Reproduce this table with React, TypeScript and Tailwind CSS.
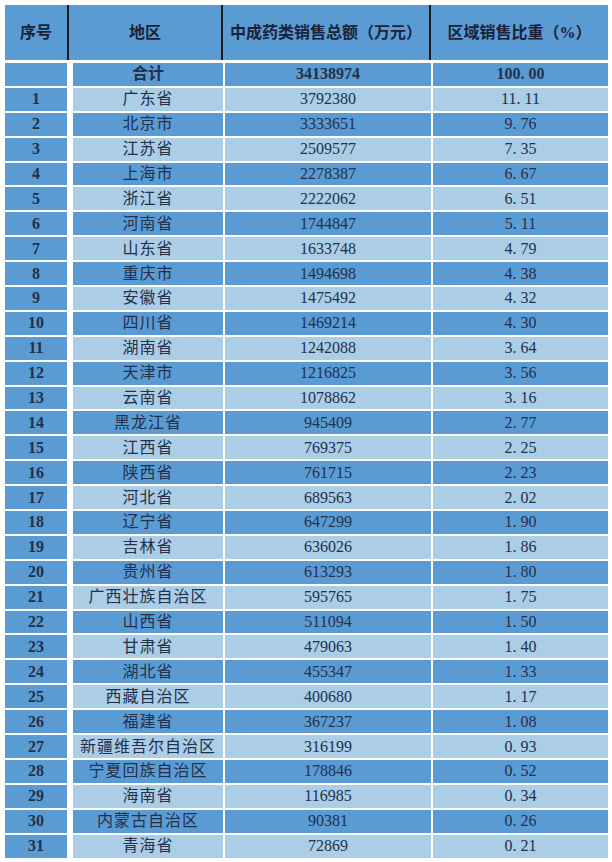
import React from 'react';

const rows: [string, string, string][] = [
    ['广东省', '3792380', '11.11'],
    ['北京市', '3333651', '9.76'],
    ['江苏省', '2509577', '7.35'],
    ['上海市', '2278387', '6.67'],
    ['浙江省', '2222062', '6.51'],
    ['河南省', '1744847', '5.11'],
    ['山东省', '1633748', '4.79'],
    ['重庆市', '1494698', '4.38'],
    ['安徽省', '1475492', '4.32'],
    ['四川省', '1469214', '4.30'],
    ['湖南省', '1242088', '3.64'],
    ['天津市', '1216825', '3.56'],
    ['云南省', '1078862', '3.16'],
    ['黑龙江省', '945409', '2.77'],
    ['江西省', '769375', '2.25'],
    ['陕西省', '761715', '2.23'],
    ['河北省', '689563', '2.02'],
    ['辽宁省', '647299', '1.90'],
    ['吉林省', '636026', '1.86'],
    ['贵州省', '613293', '1.80'],
    ['广西壮族自治区', '595765', '1.75'],
    ['山西省', '511094', '1.50'],
    ['甘肃省', '479063', '1.40'],
    ['湖北省', '455347', '1.33'],
    ['西藏自治区', '400680', '1.17'],
    ['福建省', '367237', '1.08'],
    ['新疆维吾尔自治区', '316199', '0.93'],
    ['宁夏回族自治区', '178846', '0.52'],
    ['海南省', '116985', '0.34'],
    ['内蒙古自治区', '90381', '0.26'],
    ['青海省', '72869', '0.21'],
];

const font = { fontFamily: '"Liberation Serif", "Noto Sans CJK SC", serif' };

// 小数点后留一点空隙，像原表的宋体
function Share({ value }: { value: string }) {
    const [a, b] = value.split('.');
    return (
        <span>
            {a}.<span className="ml-[4px]">{b}</span>
        </span>
    );
}

export default function App() {
    return (
        <div className="w-[612px] h-[862px] bg-white pt-[5px] pl-[5px] overflow-hidden text-[#22304c]" style={font}>
            {/* 表头 */}
            <div className="flex h-[55px] w-[603px] bg-[#5b9bd3] text-[#1a2238] text-[16px] font-bold">
                <div className="w-[64px] flex items-center justify-center border-r-2 border-[#1b1b1b]">序号</div>
                <div className="w-[154px] flex items-center justify-center border-r-2 border-[#1b1b1b]">地区</div>
                <div className="w-[208px] flex items-center justify-center border-r-2 border-[#1b1b1b]">中成药类销售总额（万元）</div>
                <div className="flex-1 flex items-center justify-center">区域销售比重（%）</div>
            </div>

            <div className="flex flex-col gap-[2px] mt-[3px] w-[603px] text-[16px]">
                {/* 合计 */}
                <div className="flex h-[22.9px] gap-[2px] font-bold">
                    <div className="w-[62px] bg-[#5b9bd3]" />
                    <div className="w-[4px] bg-white -ml-[2px]" />
                    <div className="w-[150px] bg-[#5b9bd3] flex items-center justify-center">合计</div>
                    <div className="w-[206px] bg-[#5b9bd3] flex items-center justify-center">34138974</div>
                    <div className="flex-1 bg-[#5b9bd3] flex items-center justify-center">
                        <Share value="100.00" />
                    </div>
                </div>

                {rows.map(([region, amount, share], i) => {
                    const bg = i % 2 === 0 ? 'bg-[#abcde6]' : 'bg-[#5b9bd3]';
                    return (
                        <div key={region} className="flex h-[22.9px] gap-[2px]">
                            <div className="w-[62px] bg-[#5b9bd3] flex items-center justify-center font-bold">{i + 1}</div>
                            <div className="w-[4px] bg-white -ml-[2px]" />
                            <div className={`w-[150px] ${bg} flex items-center justify-center tracking-[1px]`}>{region}</div>
                            <div className={`w-[206px] ${bg} flex items-center justify-center`}>{amount}</div>
                            <div className={`flex-1 ${bg} flex items-center justify-center`}>
                                <Share value={share} />
                            </div>
                        </div>
                    );
                })}
            </div>
        </div>
    );
}
